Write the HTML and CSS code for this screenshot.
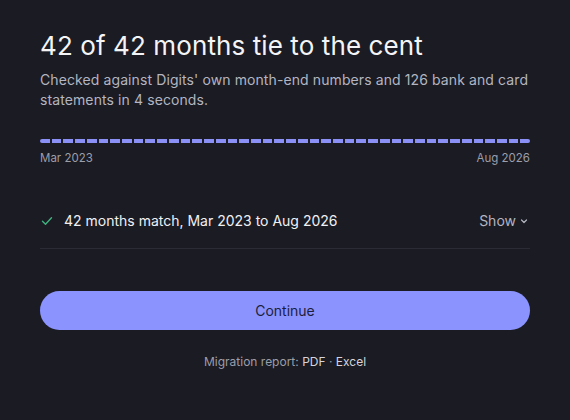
FILE: index.html
```html
<!DOCTYPE html>
<html>
<head>
<meta charset="utf-8">
<link rel="stylesheet" href="styles.css">
</head>
<body>
<main class="card">
  <h1 class="title">42 of 42 months tie to the cent</h1>
  <p class="subtitle">Checked against Digits' own month-end numbers and 126 bank and card statements in 4 seconds.</p>

  <div class="timeline">
    <div class="bar" id="bar"></div>
    <div class="labels"><span>Mar 2023</span><span>Aug 2026</span></div>
  </div>

  <div class="row">
    <div class="row-left">
      <svg class="check" width="12" height="12" viewBox="0 0 12 12"><path d="M1.5 6.3 L4.5 9.2 L10.5 2.8" fill="none" stroke="#3fb27f" stroke-width="1.4" stroke-linecap="round" stroke-linejoin="round"/></svg>
      <span class="row-text">42 months match, Mar 2023 to Aug 2026</span>
    </div>
    <button class="show">Show <svg width="8" height="8" viewBox="0 0 8 8"><path d="M1.5 3 L4 5.5 L6.5 3" fill="none" stroke="currentColor" stroke-width="1.2" stroke-linecap="round" stroke-linejoin="round"/></svg></button>
  </div>

  <button class="continue">Continue</button>

  <p class="footer">Migration report: <a class="link">PDF</a> · <a class="link">Excel</a></p>
</main>
<script>
  var bar = document.getElementById('bar');
  for (var i = 0; i < 42; i++) {
    var s = document.createElement('span');
    s.className = 'seg';
    bar.appendChild(s);
  }
</script>
</body>
</html>
```

FILE: styles.css
```css
html, body {
  margin: 0;
  padding: 0;
  background: #1a1b23;
}
body {
  font-family: Inter, "Noto Sans", sans-serif;
  color: #f2f2f5;
}
.card {
  width: 490px;
  padding: 30px 40px 0 40px;
}
.title {
  margin: 0;
  font-size: 26px;
  line-height: 32px;
  font-weight: 400;
  letter-spacing: 0.1px;
  color: #f4f4f7;
}
.subtitle {
  margin: 8px 0 0 0;
  font-size: 14px;
  line-height: 20px;
  letter-spacing: 0.1px;
  color: #b3b5c0;
}
.timeline {
  margin-top: 29px;
}
.bar {
  display: flex;
  gap: 2px;
  height: 4px;
}
.seg {
  flex: 1;
  background: #8a90f5;
}
.seg:first-child { border-radius: 2px 0 0 2px; }
.seg:last-child { border-radius: 0 2px 2px 0; }
.labels {
  display: flex;
  justify-content: space-between;
  margin-top: 8px;
  font-size: 11.5px;
  line-height: 14px;
  color: #9c9ea9;
}
.row {
  display: flex;
  justify-content: space-between;
  align-items: center;
  margin-top: 34px;
  padding: 12px 0 17px 0;
  border-bottom: 1px solid #2a2b35;
}
.row-left {
  display: flex;
  align-items: center;
  gap: 11px;
  padding-left: 1px;
}
.check { display: block; }
.row-text {
  font-size: 14px;
  line-height: 20px;
  color: #f0f0f4;
}
.show {
  background: none;
  border: 0;
  padding: 0 2px 0 0;
  font-family: inherit;
  font-size: 14px;
  line-height: 20px;
  color: #b3b5c0;
  display: flex;
  align-items: center;
  gap: 4px;
}
.continue {
  display: block;
  width: 100%;
  margin-top: 42px;
  height: 39px;
  border: 0;
  border-radius: 20px;
  background: #8b93ff;
  color: #1d1e3c;
  font-family: inherit;
  font-size: 14px;
}
.footer {
  margin: 24px 0 0 0;
  text-align: center;
  font-size: 12px;
  line-height: 16px;
  color: #9c9ea9;
}
.link {
  color: #d4d5dc;
  text-decoration: none;
  border-bottom: 1px solid #4a4c58;
  padding-bottom: 2px;
}
```
